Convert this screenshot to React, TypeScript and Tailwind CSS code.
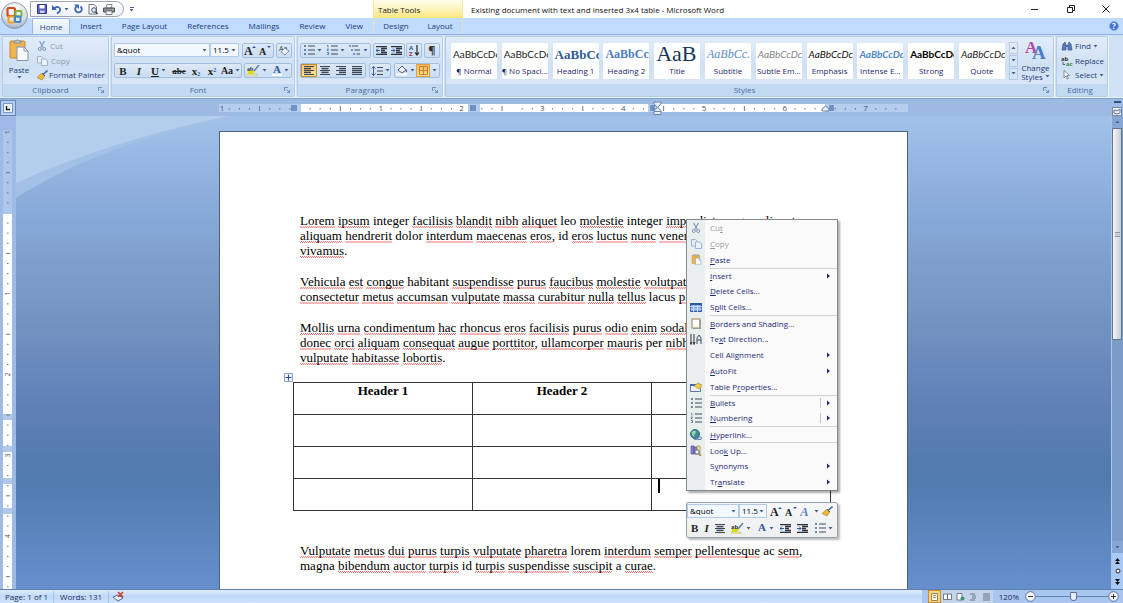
import type { ReactNode } from "react";

const TABS = ["Insert", "Page Layout", "References", "Mailings", "Review", "View"];

const STYLES = [
  { name: "¶ Normal", sample: "AaBbCcDc", look: "font-['Lato',sans-serif] text-[10px] text-[#222]" },
  { name: "¶ No Spaci...", sample: "AaBbCcDc", look: "font-['Lato',sans-serif] text-[10px] text-[#222]" },
  { name: "Heading 1", sample: "AaBbCc", look: "font-['Liberation_Serif',serif] font-bold text-[13px] text-[#2f5d94]" },
  { name: "Heading 2", sample: "AaBbCc", look: "font-['Liberation_Serif',serif] font-bold text-[12px] text-[#4a7cc0]" },
  { name: "Title", sample: "AaB", look: "font-['Liberation_Serif',serif] text-[22px] text-[#17365d]" },
  { name: "Subtitle", sample: "AaBbCc.", look: "font-['Liberation_Serif',serif] italic text-[12px] text-[#5b8ac6]" },
  { name: "Subtle Em...", sample: "AaBbCcDc", look: "font-['Lato',sans-serif] italic text-[10px] text-[#858585]" },
  { name: "Emphasis", sample: "AaBbCcDc", look: "font-['Lato',sans-serif] italic text-[10px] text-[#111]" },
  { name: "Intense E...", sample: "AaBbCcDc", look: "font-['Lato',sans-serif] italic font-bold text-[10px] text-[#4a86c8]" },
  { name: "Strong", sample: "AaBbCcDc", look: "font-['Lato',sans-serif] font-bold text-[10px] text-black" },
  { name: "Quote", sample: "AaBbCcDc", look: "font-['Lato',sans-serif] italic text-[10px] text-[#222]" },
];

const PARAGRAPHS = [
  [
    "Lorem ipsum integer facilisis blandit nibh aliquet leo molestie integer imperdiet congue aliquet",
    "aliquam hendrerit dolor interdum maecenas eros, id eros luctus nunc venenatis",
    "vivamus.",
  ],
  [
    "Vehicula est congue habitant suspendisse purus faucibus molestie volutpat",
    "consectetur metus accumsan vulputate massa curabitur nulla tellus lacus placerat",
  ],
  [
    "Mollis urna condimentum hac rhoncus eros facilisis purus odio enim sodales",
    "donec orci aliquam consequat augue porttitor, ullamcorper mauris per nibh",
    "vulputate habitasse lobortis.",
  ],
];

const CLOSING = [
  "Vulputate metus dui purus turpis vulputate pharetra lorem interdum semper pellentesque ac sem,",
  "magna bibendum auctor turpis id turpis suspendisse suscipit a curae.",
];

// words the spell checker accepts
const KNOWN = ["integer", "leo", "dolor", "id", "habitant", "lacus", "per", "a", "ac", "lorem", "magna"];

function Ico({ w = 11, h = 11, children }: { w?: number; h?: number; children: ReactNode }) {
  return (
    <svg width={w} height={h} viewBox={`0 0 ${w} ${h}`} fill="none" className="shrink-0" aria-hidden="true">
      {children}
    </svg>
  );
}

const Caret = () => (
  <Ico w={5} h={3}>
    <path d="M.5 0h4L2.500 2.500z" fill="#44618f" />
  </Ico>
);

const Launcher = () => (
  <Ico w={6} h={6}>
    <path d="M.5 4V.5H4M2.500 2.500l3 3M5.500 3v2.500H3" stroke="#5f7fae" strokeWidth=".8" />
  </Ico>
);

const Scissors = () => (
  <Ico w={10} h={10}>
    <path d="M2.500 0l3.700 6.500M7.500 0L3.800 6.500" stroke="#7f9cc4" strokeWidth="1.200" />
    <circle cx="2.800" cy="8" r="1.500" stroke="#8098bc" />
    <circle cx="7.200" cy="8" r="1.500" stroke="#8098bc" />
  </Ico>
);

const Copy = () => (
  <Ico w={11} h={10}>
    <path d="M.5.5h4l1.500 1.500v5H.5z" fill="#e5edf7" stroke="#9fb3d0" />
    <path d="M4.500 3h4L10.500 5v4.500h-6z" fill="#eef3fa" stroke="#9fb3d0" />
  </Ico>
);

const Brush = () => (
  <Ico>
    <path d="M10.500.5L6 4.500" stroke="#4a6ea8" strokeWidth="1.600" />
    <path d="M4.500 3.500l3 3L5 10 0 7.500z" fill="#e8b93c" stroke="#a87a1c" strokeWidth=".6" />
    <path d="M5 3l3 3" stroke="#6d5a3a" />
  </Ico>
);

const Clip = ({ big }: { big?: boolean }) => (
  <svg width={big ? 20 : 11} height={big ? 22 : 11} viewBox="0 0 20 22" fill="none" aria-hidden="true">
    <rect x="1" y="2" width="15" height="17" rx="1" fill="#eeb54e" stroke="#c08a35" />
    <path d="M5 4V2h2.500l1-1.500L10 2h2v2z" fill="#c3cbd6" stroke="#76808f" strokeWidth=".8" />
    <path d="M8 8h7l4 4v9.500H8z" fill="#f8fafd" stroke="#8393ad" />
    <path d="M15 8v4h4" stroke="#8393ad" />
  </svg>
);

const Lines = ({ align }: { align: "left" | "center" | "right" | "full" }) => {
  const x = { left: 0, center: 1.5, right: 3, full: 0 }[align];
  const w = align === "full" ? 10 : 7;
  return (
    <Ico w={10} h={9}>
      <path d="M0 .5h10M0 4.500h10M0 8.500h10" stroke="#3d4654" />
      <path d={`M${x} 2.500h${w}M${x} 6.500h${w}`} stroke="#3d4654" />
      <path d={`M${x} 1.500h${w}v6h-${w}z`} fill="#3d4654" fillOpacity=".35" />
    </Ico>
  );
};

const List = ({ kind }: { kind: "bullet" | "number" | "multi" }) => (
  <Ico w={12} h={10}>
    {kind === "bullet" && <path d="M1 1h2M1 5h2M1 9h2" stroke="#3a63a8" strokeWidth="1.600" />}
    {kind === "number" && <path d="M1 .5h1v2M1 4h1.500L1 5.500h1.500M1 7.500h1.500v2H1" stroke="#3a63a8" strokeWidth=".8" />}
    {kind === "multi" ? (
      <>
        <path d="M1 0v2M3 4v2M5 8v2" stroke="#3a63a8" strokeWidth="1.200" />
        <path d="M3 1h6M5.500 5h5.500M7.500 9H11" stroke="#454d5a" strokeWidth="1.200" />
      </>
    ) : (
      <path d="M5 1h7M5 5h7M5 9h7" stroke="#454d5a" strokeWidth="1.200" />
    )}
  </Ico>
);

const Indent = ({ out }: { out?: boolean }) => (
  <Ico w={11} h={9}>
    <path d="M0 .5h11M5 2.500h6M5 4.500h4M5 6.500h6M0 8.500h11" stroke="#2d3440" strokeWidth="1.300" />
    <path d={out ? "M4 4.500H0M2 2.500l-2 2 2 2" : "M0 4.500h4M2 2.500l2 2-2 2"} stroke="#2c5aa8" />
  </Ico>
);

const Highlighter = () => (
  <Ico w={13} h={11}>
    <text x="0" y="6" fontSize="6" fontWeight="700" fill="#333">ab</text>
    <path d="M12 0L7 6" stroke="#6682a8" strokeWidth="1.600" />
    <path d="M1 6h7l-2 3H1z" fill="#dfe000" />
    <path d="M0 9h10v2H0z" fill="#f0e9a0" stroke="#a5a58c" strokeWidth=".4" />
  </Ico>
);

const FontColor = ({ bar = true }: { bar?: boolean }) => (
  <Ico w={10} h={11}>
    <text x="5" y="8" fontSize="11" fontWeight="700" textAnchor="middle" fontFamily="Liberation Serif, serif" fill="#2f5896">A</text>
    {bar && <path d="M0 10h10" stroke="#fff" strokeWidth="2" />}
  </Ico>
);

const Grow = ({ up }: { up?: boolean }) => (
  <Ico w={12} h={11}>
    <text x="0" y="10" fontSize={up ? 12 : 10} fontWeight="700" fontFamily="Liberation Serif, serif" fill="#222">A</text>
    <path d={up ? "M8 3h4l-2-2z" : "M8 1h4l-2 2z"} fill="#2f5896" />
  </Ico>
);

const Globe = () => (
  <Ico w={12} h={11}>
    <circle cx="5" cy="5" r="4.500" fill="#3f8f94" stroke="#2c6c86" />
    <path d="M2 3c2-2 4-1 4 0S4 5 4 7 1 5 2 3z" fill="#9fd3a5" />
    <rect x="4" y="8" width="4" height="2.500" rx="1.200" stroke="#5a79aa" />
    <rect x="7.500" y="8" width="4" height="2.500" rx="1.200" stroke="#5a79aa" />
  </Ico>
);

const MENU: { before: string; key: string; after: string; icon?: ReactNode; sub?: boolean; off?: boolean; split?: boolean; rule?: boolean }[] = [
  { before: "Cu", key: "t", after: "", icon: <Scissors />, off: true },
  { before: "", key: "C", after: "opy", icon: <Copy />, off: true },
  { before: "", key: "P", after: "aste", icon: <Clip /> },
  { before: "", key: "I", after: "nsert", sub: true, rule: true },
  { before: "", key: "D", after: "elete Cells..." },
  {
    before: "S", key: "p", after: "lit Cells...",
    icon: (
      <Ico w={12} h={9}>
        <path d="M.5.5h11v8H.5z" fill="#7ea6e6" stroke="#2f59a5" />
        <path d="M0 3.500h12M0 6h12M3.500 0v9M7.500 0v9" stroke="#e4eefb" strokeWidth=".7" />
        <path d="M0 0h12v2H0z" fill="#2f59a5" />
      </Ico>
    ),
  },
  {
    before: "", key: "B", after: "orders and Shading...", rule: true,
    icon: (
      <Ico w={10} h={11}>
        <path d="M1 1h8v9H1z" fill="#fff" stroke="#b8ab90" strokeWidth="1.600" />
        <path d="M9 2v9H2" stroke="#7a7a7a" strokeWidth=".8" />
      </Ico>
    ),
  },
  {
    before: "Te", key: "x", after: "t Direction...",
    icon: (
      <Ico w={12} h={11}>
        <path d="M1 0v9M4 0v9M0 8l1 2.500L2 8M3 8l1 2.500L5 8" stroke="#333" />
        <path d="M7 10V4l2-3 2 3v6M7 6h4" stroke="#3a4c6a" />
      </Ico>
    ),
  },
  { before: "Cell Ali", key: "g", after: "nment", sub: true },
  { before: "", key: "A", after: "utoFit", sub: true },
  {
    before: "Table P", key: "r", after: "operties...",
    icon: (
      <Ico w={12} h={10}>
        <path d="M.5 2.500h10v7H.5z" fill="#eef3fa" stroke="#5a79aa" />
        <path d="M0 2h11v2H0z" fill="#3f6bb5" />
        <path d="M4 4l4-3 4 2-2 4-3-1z" fill="#eccb52" stroke="#a98c2f" strokeWidth=".6" />
      </Ico>
    ),
  },
  { before: "", key: "B", after: "ullets", icon: <List kind="bullet" />, sub: true, split: true, rule: true },
  { before: "", key: "N", after: "umbering", icon: <List kind="number" />, sub: true, split: true },
  { before: "", key: "H", after: "yperlink...", icon: <Globe />, rule: true },
  {
    before: "Loo", key: "k", after: " Up...", rule: true,
    icon: (
      <Ico w={12} h={11}>
        <path d="M1 1h3v8H1zM4 2h3v7H4z" fill="#8a7fd0" stroke="#5a4f9c" strokeWidth=".7" />
        <path d="M7 1h3v8H7z" fill="#f2dd98" stroke="#a08a4a" strokeWidth=".7" />
        <circle cx="7" cy="7" r="2.200" fill="#e8f0fb" stroke="#5d6a80" />
        <path d="M9 9l2 2" stroke="#a87a1c" strokeWidth="1.400" />
      </Ico>
    ),
  },
  { before: "S", key: "y", after: "nonyms", sub: true },
  { before: "Tr", key: "a", after: "nslate", sub: true },
];

function Group({ title, className, launcher = true, children }: { title: string; className: string; launcher?: boolean; children: ReactNode }) {
  return (
    <section className={`flex flex-col rounded-[2px] border border-[#b4cce8] bg-linear-to-b from-[#e1ecf9] via-[#cfe0f3] to-[#dcebfb] shadow-[1px_0_0_#eef5fd] ${className}`}>
      <div className="flex min-h-0 flex-1">{children}</div>
      <div className="flex h-[12px] items-center bg-[#c1d9f1] pr-1 text-[#4a6da5]">
        <span className="flex-1 text-center">{title}</span>
        {launcher && <button aria-label={`${title} options`}><Launcher /></button>}
      </div>
    </section>
  );
}

function Bar({ children }: { children: ReactNode }) {
  return (
    <div className="flex h-[15px] items-center rounded-[2px] border border-[#a3bfe0] bg-linear-to-b from-[#dde9f7] to-[#cbddf2]">
      {children}
    </div>
  );
}

function Btn({ label, className = "", children }: { label: string; className?: string; children: ReactNode }) {
  return (
    <button aria-label={label} className={`flex h-full items-center justify-center gap-[2px] ${className}`}>
      {children}
    </button>
  );
}

function Combo({ label, value, className }: { label: string; value: string; className: string }) {
  return (
    <label className={`relative flex h-[14px] items-center border border-[#b3cbe8] bg-[#f2f8ff] ${className}`}>
      <select aria-label={label} className="h-full w-full appearance-none pl-[2px] font-['Open_Sans','Noto_Sans',sans-serif] text-[8px] leading-none font-normal text-black outline-none">
        <option>{value}</option>
      </select>
      <span className="pointer-events-none absolute right-[2px]"><Caret /></span>
    </label>
  );
}

function Line({ text }: { text: string }) {
  return (
    <span className="block whitespace-nowrap">
      {text.split(" ").map((word, i) => {
        const bare = word.replace(/[.,]/, "");
        return (
          <span key={i}>
            {i > 0 && " "}
            {KNOWN.includes(bare) ? bare : (
              <span className="bg-[conic-gradient(#f26d6d_25%,#fff_0_50%,#f26d6d_0_75%,#fff_0)] bg-[length:2px_2px] bg-bottom bg-repeat-x">{bare}</span>
            )}
            {word.slice(bare.length)}
          </span>
        );
      })}
    </span>
  );
}

function HorizontalRuler() {
  const ticks = Array.from({ length: 68 }, (_, i) => i - 8);
  return (
    <svg width="689" height="16" viewBox="219 0 689 16" className="shrink-0" aria-hidden="true">
      <path d="M219 5h689v8H219z" fill="#b5cdee" />
      <path d="M301 5h167v8H301zM480 5h168v8H480zM659 5h166v8H659z" fill="#fff" />
      <path d="M291 6h6v6h-6zM470 6h6v6h-6zM650 6h5v6h-5zM829 6h5v6h-5z" fill="#6f93c6" />
      {ticks.map((t) => {
        const x = 300 + t * 10.1;
        if (t === 0 || (t > 20 && t < 22) || x > 904) return null;
        if (t % 8 === 0)
          return <text key={t} x={Math.max(x, 222)} y="12" fontSize="8" textAnchor="middle" fill="#4a5568">{Math.abs(t / 8)}</text>;
        return <path key={t} d={t % 4 === 0 ? `M${x} 7v5` : `M${x} 9v1.500`} stroke="#6c7a92" />;
      })}
      <path d="M654 3h7v2l-3.500 3.500L654 5zM657.500 8.500l3.500 3v4h-7v-4z" fill="#e3ecf8" stroke="#6f86ab" />
      <path d="M654 12.500h7" stroke="#6f86ab" />
      <path d="M825.500 7l3.500 3v2h-7v-2z" fill="#e3ecf8" stroke="#6f86ab" />
    </svg>
  );
}

function VerticalRuler() {
  const ticks = Array.from({ length: 47 }, (_, i) => i - 8);
  return (
    <svg width="16" height="473" viewBox="0 116 16 473" className="shrink-0" aria-hidden="true">
      <path d="M3 130h9v84H3z" fill="#adc6e9" />
      <path d="M3 214h9v375H3z" fill="#fff" />
      <path d="M3 414h9v6H3zM3 446h9v6H3zM3 478h9v6H3zM3 508h9v6H3z" fill="#b0c8ea" />
      {ticks.map((t) => {
        const y = 213 + t * 10.1;
        if (t === 0) return null;
        if (t % 8 === 0)
          return (
            <text key={t} transform={`translate(10 ${y}) rotate(-90)`} fontSize="7" textAnchor="middle" fill="#4a5568">
              {Math.abs(t / 8)}
            </text>
          );
        return <path key={t} d={t % 4 === 0 ? `M6 ${y}h4` : `M7 ${y}h1.500`} stroke="#6c7a92" />;
      })}
    </svg>
  );
}

function ContextMenu() {
  return (
    <div role="menu" className="absolute top-[87px] left-[466px] flex h-[272px] w-[152px] flex-col border border-[#868a91] bg-[linear-gradient(90deg,#e9eeee_18px,#fafafa_18px)] shadow-[2px_2px_2px_#00000055]">
      {MENU.map((m) => (
        <div key={m.before + m.key + m.after} className="flex min-h-0 flex-1 flex-col">
          {m.rule && <hr className="ml-[23px] border-[#cfd3d8]" />}
          <button role="menuitem" disabled={m.off} className={`flex min-h-0 flex-1 items-center pr-[6px] text-left ${m.off ? "text-[#9a9a9a]" : "text-[#1d2a78]"}`}>
            <span className="flex w-[23px] justify-center pr-[5px]">{m.icon}</span>
            <span className="flex-1">{m.before}<u>{m.key}</u>{m.after}</span>
            {m.split && <span className="mr-[6px] h-[10px] border-l border-[#c3c7cc]" />}
            {m.sub && <Ico w={4} h={6}><path d="M0 .5L3 3 0 5.500z" fill="#1d2a78" /></Ico>}
          </button>
        </div>
      ))}
    </div>
  );
}

function MiniToolbar() {
  return (
    <div className="absolute top-[370px] left-[466px] flex w-[152px] flex-col rounded-[2px] border border-[#9aa0a8] bg-linear-to-b from-[#f7f8f9] to-[#eceef0] shadow-[2px_2px_2px_#00000044]">
      <div className="flex h-4 items-center justify-between pr-1">
        <div className="flex">
          <Combo label="Font name" value="&quot" className="w-[52px]" />
          <Combo label="Font size" value="11.5" className="w-[28px]" />
        </div>
        <Btn label="Grow font"><Grow up /></Btn>
        <Btn label="Shrink font"><Grow /></Btn>
        <Btn label="Styles">
          <Ico w={12} h={11}>
            <text x="0" y="10" fontSize="13" fontStyle="italic" fontWeight="700" fontFamily="Liberation Serif, serif" fill="#5b86c4">A</text>
          </Ico>
          <Caret />
        </Btn>
        <Btn label="Format painter"><Brush /></Btn>
      </div>
      <div className="flex h-[18px] items-center justify-between px-1 text-[#222]">
        <Btn label="Bold"><b className="font-['Liberation_Serif',serif] text-[11px]">B</b></Btn>
        <Btn label="Italic"><i className="font-['Liberation_Serif',serif] text-[11px] font-bold">I</i></Btn>
        <Btn label="Center"><Lines align="center" /></Btn>
        <Btn label="Highlight"><Highlighter /><Caret /></Btn>
        <Btn label="Font color"><FontColor bar={false} /><Caret /></Btn>
        <Btn label="Decrease indent"><Indent out /></Btn>
        <Btn label="Increase indent"><Indent /></Btn>
        <Btn label="Bullets"><List kind="bullet" /><Caret /></Btn>
      </div>
    </div>
  );
}

function TitleBar() {
  return (
    <header className="relative flex h-[18px] shrink-0 bg-white text-[#222]">
      <div className="flex w-[373px] shrink-0 items-start pt-[1px] pl-[30px]">
        <div className="flex h-[16px] w-[94px] items-center justify-between rounded-r-full border border-[#9aa6b8] bg-linear-to-b from-white to-[#eef2f8] pr-2 pl-[6px]">
          <Btn label="Save">
            <Ico w={10} h={10}>
              <path d="M.5.5h9v9h-9z" fill="#5a5fc4" stroke="#34388c" />
              <path d="M2.500 1h5v3.500h-5z" fill="#fff" />
              <path d="M3 6.500h4.500V9H3z" fill="#cfd4ee" />
            </Ico>
          </Btn>
          <Btn label="Undo">
            <Ico w={10} h={9}>
              <path d="M2 3.500c3-3 7-1 6 2-.5 1.500-2 2.500-3 3" stroke="#3c66b8" strokeWidth="1.800" />
              <path d="M0 0v5h5z" fill="#3c66b8" />
            </Ico>
            <Caret />
          </Btn>
          <Btn label="Redo">
            <Ico w={9} h={10}>
              <path d="M6.500 2.500a3.300 3.300 0 1 1-4 0" stroke="#3c66b8" strokeWidth="1.800" />
              <path d="M0 .5h5v4.500z" fill="#3c66b8" />
            </Ico>
          </Btn>
          <Btn label="Print preview">
            <Ico w={10} h={11}>
              <path d="M1 .5h5l2.500 2.500v7H1z" fill="#fff" stroke="#6b7686" />
              <circle cx="6" cy="6" r="2.300" fill="#d7e6f5" stroke="#4b5a70" />
              <path d="M7.500 8l2 2" stroke="#333" strokeWidth="1.400" />
            </Ico>
          </Btn>
          <Btn label="Print">
            <Ico w={12} h={11}>
              <path d="M3 4l1-3.500h5L8.500 4z" fill="#fff" stroke="#666" strokeWidth=".8" />
              <path d="M.5 4h11v4H.5z" fill="#8a8f98" stroke="#4e535b" />
              <path d="M3 7h6v3.500H3z" fill="#f4f4f4" stroke="#666" strokeWidth=".8" />
              <path d="M9 5.500h1.500" stroke="#7fe07f" />
            </Ico>
          </Btn>
        </div>
        <button aria-label="Customize toolbar" className="flex h-[16px] flex-col items-center justify-center gap-[1px] pl-[5px]">
          <span className="h-[1px] w-[4px] bg-[#44618f]" />
          <Caret />
        </button>
      </div>
      <div className="flex w-[90px] shrink-0 items-center border-x border-[#f1e6a8] bg-linear-to-b from-[#fffdf0] to-[#fce77d] pt-[1px] pl-1">Table Tools</div>
      <h1 className="flex-1 self-center pt-[1px] pl-2 text-[#111]">Existing document with text and inserted 3x4 table - Microsoft Word</h1>
      <div className="flex w-[92px] items-center justify-between pr-[13px]">
        <Btn label="Minimize"><Ico w={8} h={8}><path d="M0 4.500h7" stroke="#222" /></Ico></Btn>
        <Btn label="Restore"><Ico w={8} h={8}><path d="M.5 2.500h5v5h-5zM2.500 2V.5h5v5H6" stroke="#222" /></Ico></Btn>
        <Btn label="Close"><Ico w={8} h={8}><path d="M.5.5l7 7M7.500.5l-7 7" stroke="#222" /></Ico></Btn>
      </div>
      {/* Office button sits over both rows */}
      <button aria-label="Office" className="absolute top-[2px] left-[1px] z-10">
        <svg width="27" height="27" viewBox="0 0 27 27" fill="none">
          <defs>
            <radialGradient id="orb" cx="50%" cy="30%" r="70%">
              <stop offset="0" stopColor="#fff" />
              <stop offset=".7" stopColor="#d7dde6" />
              <stop offset="1" stopColor="#98a5b8" />
            </radialGradient>
          </defs>
          <circle cx="13.500" cy="13.500" r="13" fill="url(#orb)" stroke="#8d9bb2" />
          <rect x="6.500" y="6" width="7.500" height="8" rx="1.500" stroke="#d8491e" strokeWidth="2.200" />
          <rect x="14.500" y="9" width="6" height="5.500" rx="1" stroke="#7ab43c" strokeWidth="2" />
          <rect x="7.500" y="14.500" width="6" height="6" rx="1" stroke="#f0a01e" strokeWidth="2" />
          <rect x="14" y="14.500" width="5.500" height="5.500" rx="1" stroke="#3f86d0" strokeWidth="2" />
        </svg>
      </button>
    </header>
  );
}

function Ribbon() {
  return (
    <div className="flex h-[64px] shrink-0 gap-[2px] border-y border-[#8db2e3] border-b-[#eaf4ff] bg-[#d0e1f5] pt-[1px] pr-[15px] pl-[2px] text-[#1e3c7b]">
      <Group title="Clipboard" className="w-[107px]">
        <button className="flex w-8 flex-col items-center pt-[2px] leading-[12px]">
          <Clip big />
          <span className="pt-[3px]">Paste</span>
          <Caret />
        </button>
        <div className="flex flex-1 flex-col justify-between py-[2px] pl-[2px]">
          <button disabled className="flex h-[14px] items-center gap-[3px] text-[#8c9aae]"><Scissors />Cut</button>
          <button disabled className="flex h-[14px] items-center gap-[3px] text-[#8c9aae]"><Copy />Copy</button>
          <button className="flex h-[14px] items-center gap-[1px] whitespace-nowrap"><Brush />Format Painter</button>
        </div>
      </Group>
      <Group title="Font" className="w-[184px]">
        <div className="flex flex-1 flex-col justify-evenly px-[2px]">
          <div className="flex items-center justify-between">
            <div className="flex">
              <Combo label="Font" value="&quot" className="w-[96px]" />
              <Combo label="Size" value="11.5" className="w-[29px]" />
            </div>
            <Bar>
              <Btn label="Grow font" className="w-[15px]"><Grow up /></Btn>
              <Btn label="Shrink font" className="w-[15px]"><Grow /></Btn>
            </Bar>
            <Bar>
              <Btn label="Clear formatting" className="w-[14px]">
                <Ico w={12} h={11}>
                  <text x="1" y="6" fontSize="7" fill="#444">Aa</text>
                  <path d="M3 7l4-4 4 3-4 4z" fill="#eef2f8" stroke="#63779a" strokeWidth=".8" />
                </Ico>
              </Btn>
            </Bar>
          </div>
          <div className="flex items-center justify-between font-['Liberation_Serif',serif] text-[11px] font-bold text-[#222]">
            <Bar>
              <Btn label="Bold" className="w-4">B</Btn>
              <Btn label="Italic" className="w-4"><i>I</i></Btn>
              <Btn label="Underline" className="w-[23px]"><u>U</u><Caret /></Btn>
              <Btn label="Strikethrough" className="w-[18px] text-[9px]"><s>abc</s></Btn>
              <Btn label="Subscript" className="w-4"><span>x<sub className="text-[6px] text-[#2f5896]">2</sub></span></Btn>
              <Btn label="Superscript" className="w-4"><span>x<sup className="text-[6px] text-[#2f5896]">2</sup></span></Btn>
              <Btn label="Change case" className="w-[21px] text-[10px]">Aa<Caret /></Btn>
            </Bar>
            <Bar>
              <Btn label="Highlight" className="w-[24px]"><Highlighter /><Caret /></Btn>
              <Btn label="Font color" className="w-[22px]"><FontColor /><Caret /></Btn>
            </Bar>
          </div>
        </div>
      </Group>
      <Group title="Paragraph" className="w-[146px]">
        <div className="flex flex-1 flex-col justify-evenly px-[2px]">
          <div className="flex items-center justify-between">
            <Bar>
              <Btn label="Bullets" className="w-[23px]"><List kind="bullet" /><Caret /></Btn>
              <Btn label="Numbering" className="w-[23px]"><List kind="number" /><Caret /></Btn>
              <Btn label="Multilevel list" className="w-[23px]"><List kind="multi" /><Caret /></Btn>
            </Bar>
            <Bar>
              <Btn label="Decrease indent" className="w-[15px]"><Indent out /></Btn>
              <Btn label="Increase indent" className="w-[15px]"><Indent /></Btn>
            </Bar>
            <Bar>
              <Btn label="Sort" className="w-[14px]">
                <Ico w={11} h={11}>
                  <text x="0" y="5" fontSize="6" fontWeight="700" fill="#2f5896">A</text>
                  <text x="0" y="11" fontSize="6" fontWeight="700" fill="#a03040">Z</text>
                  <path d="M8 0v9M6 7.500l2 2.500 2-2.500" stroke="#222" strokeWidth="1.200" />
                </Ico>
              </Btn>
            </Bar>
            <Bar><Btn label="Show marks" className="w-[14px] text-[11px] font-bold text-[#333]">¶</Btn></Bar>
          </div>
          <div className="flex items-center gap-[3px]">
            <Bar>
              <Btn label="Align left" className="w-4 border border-[#c98d2c] bg-linear-to-b from-[#fdc778] to-[#fce38f]"><Lines align="left" /></Btn>
              <Btn label="Center" className="w-4"><Lines align="center" /></Btn>
              <Btn label="Align right" className="w-4"><Lines align="right" /></Btn>
              <Btn label="Justify" className="w-4"><Lines align="full" /></Btn>
            </Bar>
            <Bar>
              <Btn label="Line spacing" className="w-[20px]">
                <Ico w={12} h={10}>
                  <path d="M2.500 0v10M.5 2.500l2-2 2 2M.5 7.500l2 2 2-2" stroke="#3a63a8" />
                  <path d="M6 1.500h6M6 5h6M6 8.500h6" stroke="#454d5a" strokeWidth="1.200" />
                </Ico>
                <Caret />
              </Btn>
            </Bar>
            <Bar>
              <Btn label="Shading" className="w-[21px]">
                <Ico w={12} h={11}>
                  <path d="M2 5l4-4 4 4-4 3z" fill="#eef3fa" stroke="#51627c" />
                  <path d="M10 4c1.500 2 1.500 3 .5 3s-1-1-.5-3z" fill="#3a63a8" />
                  <path d="M0 9.500h11" stroke="#fff" strokeWidth="2" />
                </Ico>
                <Caret />
              </Btn>
              <Btn label="Borders" className="w-[14px] border border-[#e0a040] bg-linear-to-b from-[#fdb95d] to-[#fce38f]">
                <Ico w={9} h={9}><path d="M.5.5h8v8h-8zM4.500 0v9M0 4.500h9" stroke="#c98030" /></Ico>
              </Btn>
              <Btn label="Border options" className="w-[9px]"><Caret /></Btn>
            </Bar>
          </div>
        </div>
      </Group>
      <Group title="Styles" className="min-w-0 flex-1">
        <div className="flex min-w-0 flex-1 items-center gap-1 pl-[5px]">
          <div className="flex h-[38px] min-w-0 flex-1 items-center justify-between overflow-hidden">
            {STYLES.map((s) => (
              <button key={s.name} className="flex h-[36px] w-[46px] shrink-0 flex-col overflow-hidden bg-white text-[#241f6b]">
                <span className={`flex h-[23px] w-full items-center overflow-hidden pl-[2px] leading-none whitespace-nowrap ${s.look}`}>{s.sample}</span>
                <span className="w-full text-center leading-[10px] whitespace-nowrap">{s.name}</span>
              </button>
            ))}
          </div>
          <div className="flex h-[38px] w-[9px] flex-col gap-[1px]">
            {["Row up", "Row down", "More styles"].map((l, i) => (
              <button key={l} aria-label={l} className={`flex flex-1 items-center justify-center border border-[#b3cbe8] ${i === 0 ? "rotate-180 bg-[#e6e9ee]" : "bg-[#d5e4f6]"}`}>
                <Caret />
              </button>
            ))}
          </div>
        </div>
        <button className="flex w-[35px] flex-col items-center pt-[3px] leading-[9px]">
          <Ico w={21} h={20}>
            <text x="0" y="13" fontSize="17" fontWeight="700" fontFamily="Liberation Serif, serif" fill="#b04aa0">A</text>
            <text x="7" y="19" fontSize="19" fontWeight="700" fontFamily="Liberation Serif, serif" fill="#4a7fc8">A</text>
          </Ico>
          <span className="pt-[3px]">Change</span>
          <span className="flex items-center gap-[2px]">Styles<Caret /></span>
        </button>
      </Group>
      <Group title="Editing" className="w-[52px]" launcher={false}>
        <div className="flex flex-1 flex-col justify-between py-[2px] pl-1">
          <button className="flex h-[14px] items-center gap-[2px]">
            <Ico w={12} h={10}>
              <path d="M1 9l1-6 2-2 1 3v5zM11 9l-1-6-2-2-1 3v5z" fill="#5d7fb4" stroke="#35558c" strokeWidth=".7" />
              <path d="M5 5h2" stroke="#35558c" strokeWidth="1.500" />
            </Ico>
            Find<Caret />
          </button>
          <button className="flex h-[14px] items-center gap-[2px]">
            <Ico w={12} h={10}>
              <text x="0" y="5" fontSize="6" fontWeight="700" fill="#333">ab</text>
              <text x="5" y="10" fontSize="6" fontWeight="700" fill="#3c8a3c">ac</text>
              <path d="M2 6v2.500h2" stroke="#3a63a8" />
            </Ico>
            Replace
          </button>
          <button className="flex h-[14px] items-center gap-[2px]">
            <Ico w={12} h={10}><path d="M3 .5v7.500l2-2 1.300 3 1-.5L6 5.500h2.500z" fill="#fff" stroke="#66758e" strokeWidth=".8" /></Ico>
            Select<Caret />
          </button>
        </div>
      </Group>
    </div>
  );
}

function ScrollBar() {
  return (
    <div className="flex w-3 shrink-0 flex-col items-center border-l border-[#a9c6ee] bg-[#9dbce6]">
      <button aria-label="Scroll up" className="flex h-3 w-full rotate-180 items-center justify-center bg-[#86a7d3]"><Caret /></button>
      <div className="w-full flex-1 bg-[#7b9bc8]">
        <div className="flex h-[212px] w-[10px] flex-col items-center justify-center rounded-[1px] border border-[#64748f] bg-linear-to-r from-[#f4f6f9] to-[#c8ccd4]">
          <span className="h-[5px] w-[5px] border-y border-[#8d96a5] bg-[#c9ced6]" />
        </div>
      </div>
      <button aria-label="Scroll down" className="flex h-3 w-full items-center justify-center bg-[#86a7d3]"><Caret /></button>
      <div className="flex h-[36px] w-full flex-col items-center justify-evenly bg-[#a9c8f3]">
        <button aria-label="Previous page"><Ico w={5} h={6}><path d="M0 3l2.500-3L5 3zM0 6l2.500-3L5 6z" fill="#111" /></Ico></button>
        <button aria-label="Browse object"><Ico w={6} h={6}><circle cx="3" cy="3" r="2" fill="#fff" stroke="#222" /></Ico></button>
        <button aria-label="Next page"><Ico w={5} h={6}><path d="M0 0l2.500 3L5 0zM0 3l2.500 3L5 3z" fill="#111" /></Ico></button>
      </div>
    </div>
  );
}

function StatusBar() {
  return (
    <footer className="flex h-[14px] shrink-0 items-center border-t border-[#5f7fae] bg-linear-to-b from-[#dcebff] via-[#c0d8f7] to-[#cfe3fd] text-[#1e2f5c]">
      <span className="border-r border-[#a8c3e8] px-[5px]">Page: 1 of 1</span>
      <span className="border-r border-[#a8c3e8] px-[6px]">Words: 131</span>
      <button aria-label="Proofing" className="px-[4px]">
        <Ico w={12} h={11}>
          <path d="M0 6l5-2 5 3-5 3z" fill="#f4f7fc" stroke="#4a6a9c" />
          <path d="M5 1l5 5M10 1L5 6" stroke="#d8392b" strokeWidth="1.600" />
        </Ico>
      </button>
      <div className="ml-auto flex h-full items-center bg-[#a9c6ef] pl-[6px]">
        <div className="flex h-full bg-[#c3d3e8]">
          {["Print layout", "Reading", "Web", "Outline", "Draft"].map((v, i) => (
            <Btn key={v} label={v} className={`w-[13px] ${i === 0 ? "border border-[#c98d2c] bg-[#fcd47c]" : ""}`}>
              <Ico w={9} h={8}>
                {i === 0 && <path d="M1.500.5h6v7h-6zM3 2.500h3M3 4.500h3" fill="#fff8e0" stroke="#7d6a4a" strokeWidth=".8" />}
                {i === 1 && <path d="M.5 1h4v5.500h-4zM4.500 1h4v5.500h-4z" fill="#f6f8fb" stroke="#5a6579" strokeWidth=".8" />}
                {i === 2 && <><path d="M1 .5h5v6.500H1z" fill="#f6f8fb" stroke="#5a6579" strokeWidth=".8" /><circle cx="6.500" cy="5.500" r="2" fill="#3f8f74" /></>}
                {i === 3 && <path d="M1 1h5M3 3h4M3 5h4M1 7h5" stroke="#6b7587" />}
                {i === 4 && <path d="M1 1h7M1 3h7M1 5h7M1 7h7" stroke="#6b7587" />}
              </Ico>
            </Btn>
          ))}
        </div>
        <span className="w-[26px] text-right">120%</span>
        <button aria-label="Zoom out" className="pl-[6px]">
          <Ico><circle cx="5.500" cy="5.500" r="4.800" fill="#f0f5fc" stroke="#5c7299" /><path d="M3 5.500h5" stroke="#333" /></Ico>
        </button>
        <input
          type="range"
          aria-label="Zoom"
          defaultValue={52}
          className="h-[11px] w-[72px] appearance-none bg-[linear-gradient(#6482b4,#6482b4)] bg-[length:100%_1px] bg-center bg-no-repeat [&::-webkit-slider-thumb]:h-[9px] [&::-webkit-slider-thumb]:w-[7px] [&::-webkit-slider-thumb]:appearance-none [&::-webkit-slider-thumb]:rounded-b-[3px] [&::-webkit-slider-thumb]:border [&::-webkit-slider-thumb]:border-[#5c7299] [&::-webkit-slider-thumb]:bg-[#e4edf9]"
        />
        <button aria-label="Zoom in" className="pr-[4px]">
          <Ico><circle cx="5.500" cy="5.500" r="4.800" fill="#f0f5fc" stroke="#5c7299" /><path d="M3 5.500h5M5.500 3v5" stroke="#333" /></Ico>
        </button>
      </div>
    </footer>
  );
}

export default function App() {
  return (
    <div className="flex h-screen flex-col overflow-hidden bg-[#9dbbe6] font-['Open_Sans','Noto_Sans',sans-serif] text-[8px] leading-[12px]">
      <TitleBar />

      {/* Ribbon tabs */}
      <nav className="flex h-4 shrink-0 bg-[#bfdbff] text-[#1e3c7b]">
        <div className="flex w-[373px] shrink-0 pl-[32px]">
          <button className="w-[39px] rounded-t-[2px] border border-b-0 border-[#9ab9e2] bg-linear-to-b from-[#f3f8ff] to-[#e1ecf9]">Home</button>
          {TABS.map((t) => (
            <button key={t} className="px-[10px] whitespace-nowrap">{t}</button>
          ))}
        </div>
        <div className="flex w-[90px] shrink-0 border-x border-[#dfe3c8]">
          <button className="flex-1">Design</button>
          <button className="flex-1">Layout</button>
        </div>
        <div className="flex flex-1 items-center justify-end pr-1">
          <button aria-label="Help">
            <Ico w={10} h={10}>
              <circle cx="5" cy="5" r="4.500" fill="#3f6fd0" stroke="#8fb0ea" />
              <text x="5" y="8" fontSize="8" fontWeight="700" textAnchor="middle" fill="#fff">?</text>
            </Ico>
          </button>
        </div>
      </nav>

      <Ribbon />

      {/* Ruler strip */}
      <div className="flex h-[18px] shrink-0 items-center border-t border-[#7f9fcd] bg-[#9dbae5]">
        <button aria-label="Tab stop" className="flex h-4 w-4 items-center justify-center border border-[#6787bb] bg-[#b7cfef]">
          <Ico w={10} h={10}><path d="M.5.5h9v9h-9z" fill="#eef4fc" stroke="#7895c4" /><path d="M3.500 3v3.500H7" stroke="#222" strokeWidth="1.400" /></Ico>
        </button>
        <div className="flex flex-1 justify-center pb-[2px]"><HorizontalRuler /></div>
        <button aria-label="View ruler" className="flex h-full w-3 flex-col items-center justify-between">
          <span className="mt-[2px] h-[2px] w-[7px] bg-[#33507f]" />
          <Ico w={10} h={10}><path d="M.5 1.500h9v8h-9z" fill="#eef1f6" stroke="#7b8798" /><path d="M2 4l3 1 3-2v4L5 8 2 7z" stroke="#69758a" /></Ico>
        </button>
      </div>

      <div className="flex min-h-0 flex-1">
        <div className="w-4 shrink-0 overflow-hidden bg-[#9dbbe6]"><VerticalRuler /></div>
        <main className="relative flex min-w-0 flex-1 justify-center overflow-hidden bg-[linear-gradient(#a2c2ea,#86a8d8_22%,#7898c5_38%,#5f80b6_62%,#517aae_76%,#6690cd)] pt-[15px]">
          <svg width="240" height="90" className="absolute top-0 left-0" aria-hidden="true">
            <path d="M0 0H230Q90 24 0 82z" fill="#a3c0e6" />
            <path d="M0 0H212Q90 26 0 67z" fill="#b3cdec" />
          </svg>
          <article className="relative h-[600px] w-[689px] shrink-0 border border-[#4c5f80] bg-white px-[80px] pt-[81px] font-['Liberation_Serif',serif] text-[13px] leading-[15px] text-black">
            {PARAGRAPHS.map((lines, i) => (
              <p key={i} className="mb-4">{lines.map((l) => <Line key={l} text={l} />)}</p>
            ))}
            <span className="absolute top-[241px] left-[64px]">
              <Ico w={9} h={9}>
                <path d="M.5.5h8v8h-8z" fill="#eef2fb" stroke="#8ea0c8" />
                <path d="M4.500 1.500v6M1.500 4.500h6" stroke="#2f4fa8" />
              </Ico>
            </span>
            <table className="mt-[17px] -ml-[7px] w-[538px] table-fixed border-collapse">
              <thead>
                <tr className="h-8 align-top">
                  {[1, 2, 3].map((n) => <th key={n} className="border border-[#333] font-bold">Header {n}</th>)}
                </tr>
              </thead>
              <tbody>
                {[1, 2, 3].map((r) => (
                  <tr key={r} className="h-8 align-top">
                    {[1, 2, 3].map((c) => (
                      <td key={c} className="border border-[#333] p-0 pl-[6px]">
                        {r === 3 && c === 3 && <span className="block h-[14px] w-[2px] bg-black" />}
                      </td>
                    ))}
                  </tr>
                ))}
              </tbody>
            </table>
            <p className="mt-8">{CLOSING.map((l) => <Line key={l} text={l} />)}</p>
            <div className="font-['Open_Sans','Noto_Sans',sans-serif] text-[8px] leading-[12px]">
              <ContextMenu />
              <MiniToolbar />
            </div>
          </article>
        </main>
        <ScrollBar />
      </div>

      <StatusBar />
    </div>
  );
}
